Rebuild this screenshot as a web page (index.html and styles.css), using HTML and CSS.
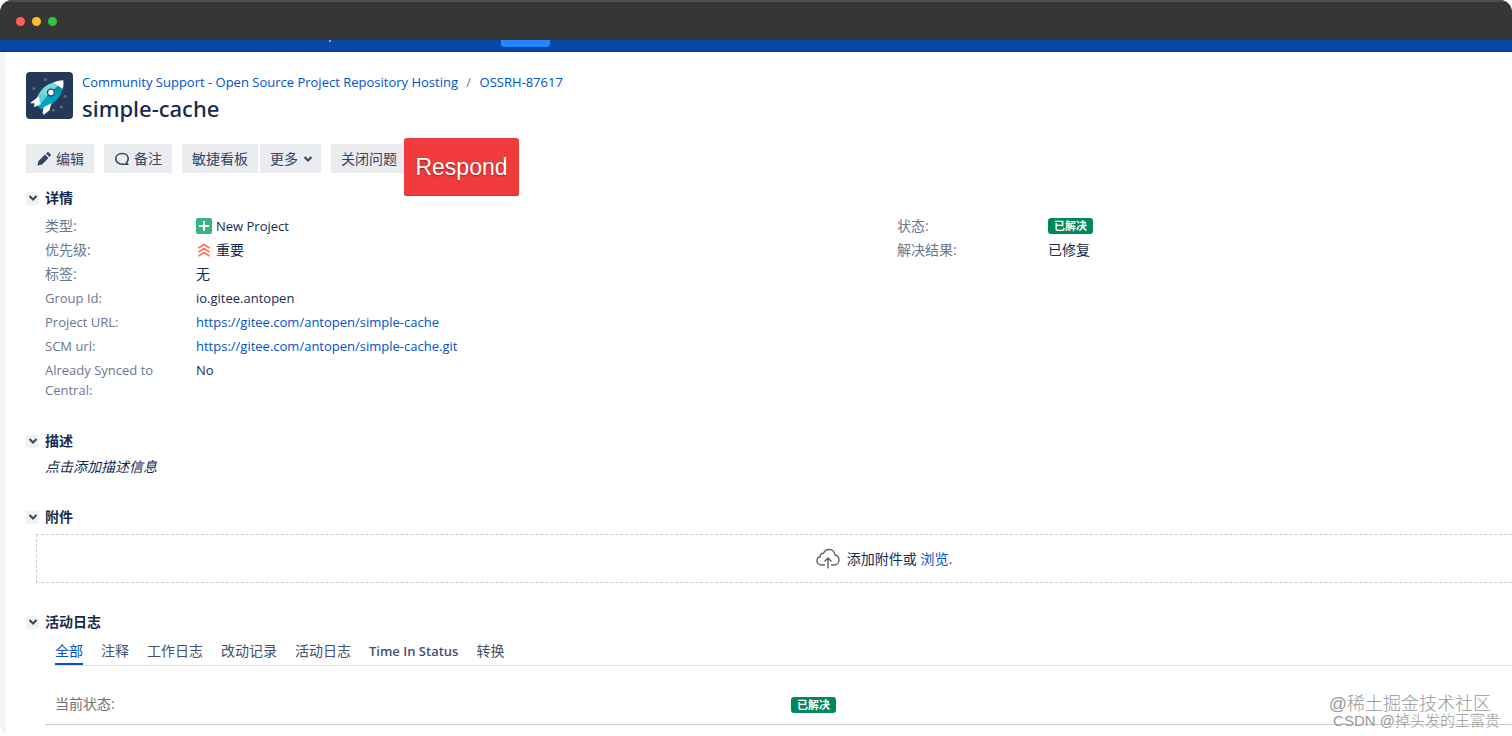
FILE: index.html
```html
<!DOCTYPE html>
<html lang="zh-CN">
<head>
    <meta charset="UTF-8">
    <meta name="viewport" content="width=device-width, initial-scale=1.0">
    <title>[OSSRH-87617] simple-cache</title>
    <link rel="stylesheet" href="styles.css">
</head>
<body>
    <div class="window">
        <div class="title-bar">
            <span class="dot dot-red"></span>
            <span class="dot dot-yellow"></span>
            <span class="dot dot-green"></span>
        </div>
        <header class="nav">
            <span class="nav-mark"></span>
            <span class="nav-create"></span>
        </header>

        <main class="content">
            <div class="issue-header">
                <svg class="avatar" viewBox="0 0 48 48" aria-hidden="true">
                    <rect width="48" height="48" rx="4" fill="#253858"/>
                    <g fill="#5e6c84">
                        <circle cx="20" cy="8" r="1.5"/>
                        <circle cx="8" cy="17" r="1.5"/>
                        <circle cx="40" cy="25" r="1.5"/>
                        <circle cx="36" cy="36" r="1.5"/>
                        <circle cx="28" cy="39" r="1.5"/>
                    </g>
                    <path d="M38 9C29 9 19 13 14 21l-5 9c-1 3 0 4 2 5z" fill="#79d8e0"/>
                    <path d="M38 9c1 10-4 19-13 25-4 3-8 5-11 3l-3-3z" fill="#00a3bf"/>
                    <path d="M38 9l-9 10 6 5c2-4 4-9 3-15z" fill="#008da6"/>
                    <path d="M15 22l-6 9 4 4 9-11z" fill="#57d0d8"/>
                    <path d="M13 25L4 32l5 0-1 4 7-3z" fill="#fff"/>
                    <path d="M26 32l-8 4-1 5 1 3 6-5z" fill="#fff"/>
                    <path d="M38 8.500c-4 0-7 1-10 2.500l9.500 6c.8-3 .9-5.500.5-8.500z" fill="#fff"/>
                    <circle cx="25.500" cy="21" r="3.500" fill="#fff" stroke="#344563" stroke-width="1.500"/>
                </svg>
                <div class="issue-titles">
                    <nav class="breadcrumbs">
                        <a href="#">Community Support - Open Source Project Repository Hosting</a>
                        <span class="slash">/</span>
                        <a href="#">OSSRH-87617</a>
                    </nav>
                    <h1>simple-cache</h1>
                </div>
            </div>

            <div class="toolbar">
                <button type="button" class="btn">
                    <svg class="icon" viewBox="0 0 16 16" aria-hidden="true"><path d="M1.500 14.500l1-4.500L9 3.500l3.500 3.500L6 13.500zM10 2.600l1.200-1.200c.5-.4 1-.4 1.500 0l1.900 1.900c.4.500.4 1 0 1.500L13.400 6z" fill="#344563"/></svg>
                    编辑
                </button>
                <button type="button" class="btn">
                    <svg class="icon" viewBox="0 0 16 16" aria-hidden="true"><path d="M8 2.500c3.500 0 6.200 2.200 6.200 5.200 0 1.600-.6 2.900-1.700 3.800l1 1.800H8c-3.500 0-6.200-2.400-6.200-5.500S4.500 2.500 8 2.500z" fill="none" stroke="#344563" stroke-width="1.600"/></svg>
                    备注
                </button>
                <div class="btn-group">
                    <button type="button" class="btn">敏捷看板</button>
                    <button type="button" class="btn btn-more">
                        更多
                        <svg class="caret" viewBox="0 0 10 10" aria-hidden="true"><path d="M1.500 3L5 6.500 8.500 3" fill="none" stroke="#344563" stroke-width="2"/></svg>
                    </button>
                </div>
                <div class="respond-group">
                    <button type="button" class="btn btn-close">关闭问题</button>
                    <button type="button" class="respond">Respond</button>
                </div>
            </div>

            <section class="module details">
                <div class="module-head">
                    <button type="button" class="toggle" aria-label="详情"><svg class="caret" viewBox="0 0 10 10" aria-hidden="true"><path d="M1.500 3L5 6.500 8.500 3" fill="none" stroke="#344563" stroke-width="2"/></svg></button>
                    <h2>详情</h2>
                </div>
                <div class="detail-columns">
                    <dl class="fields">
                        <dt>类型:</dt>
                        <dd>
                            <svg class="icon" viewBox="0 0 16 16" aria-hidden="true"><rect width="16" height="16" rx="2" fill="#36b37e"/><path d="M8 3v10M3 8h10" stroke="#fff" stroke-width="2"/></svg>
                            <span class="latin">New Project</span>
                        </dd>
                        <dt>优先级:</dt>
                        <dd>
                            <svg class="icon" viewBox="0 0 16 16" aria-hidden="true"><path d="M2.500 6L8 2.500 13.500 6M2.500 10L8 6.500l5.500 3.500M2.500 14L8 10.500l5.500 3.500" fill="none" stroke="#ff7452" stroke-width="1.800"/></svg>
                            重要
                        </dd>
                        <dt>标签:</dt>
                        <dd>无</dd>
                        <dt class="latin">Group Id:</dt>
                        <dd class="latin">io.gitee.antopen</dd>
                        <dt class="latin">Project URL:</dt>
                        <dd class="latin"><a href="#">https://gitee.com/antopen/simple-cache</a></dd>
                        <dt class="latin">SCM url:</dt>
                        <dd class="latin"><a href="#">https://gitee.com/antopen/simple-cache.git</a></dd>
                        <dt class="latin">Already Synced to Central:</dt>
                        <dd class="latin">No</dd>
                    </dl>
                    <dl class="fields">
                        <dt>状态:</dt>
                        <dd><span class="lozenge">已解决</span></dd>
                        <dt>解决结果:</dt>
                        <dd>已修复</dd>
                    </dl>
                </div>
            </section>

            <section class="module description">
                <div class="module-head">
                    <button type="button" class="toggle" aria-label="描述"><svg class="caret" viewBox="0 0 10 10" aria-hidden="true"><path d="M1.500 3L5 6.500 8.500 3" fill="none" stroke="#344563" stroke-width="2"/></svg></button>
                    <h2>描述</h2>
                </div>
                <p class="empty-text">点击添加描述信息</p>
            </section>

            <section class="module attachments">
                <div class="module-head">
                    <button type="button" class="toggle" aria-label="附件"><svg class="caret" viewBox="0 0 10 10" aria-hidden="true"><path d="M1.500 3L5 6.500 8.500 3" fill="none" stroke="#344563" stroke-width="2"/></svg></button>
                    <h2>附件</h2>
                </div>
                <div class="drop-zone">
                    <svg class="cloud" viewBox="0 0 24 24" aria-hidden="true"><path d="M9 18H5.500C3 18 1 16.200 1 13.800c0-2 1.300-3.600 3.200-4C4 7.500 5.500 6 7.600 6.200 8.600 3.700 10.500 2.500 13 2.500c3.400 0 5.800 2.300 6 5.500 2.500.6 4 2.500 4 4.900 0 2.900-2 5.100-5 5.100h-3M12 21.500V11M8.500 14.500L12 11l3.500 3.500" fill="none" stroke="#5f6368" stroke-width="1.400"/></svg>
                    <span>添加附件或 <a href="#">浏览.</a></span>
                </div>
            </section>

            <section class="module activity">
                <div class="module-head">
                    <button type="button" class="toggle" aria-label="活动日志"><svg class="caret" viewBox="0 0 10 10" aria-hidden="true"><path d="M1.500 3L5 6.500 8.500 3" fill="none" stroke="#344563" stroke-width="2"/></svg></button>
                    <h2>活动日志</h2>
                </div>
                <nav class="tabs">
                    <a href="#" class="active">全部</a>
                    <a href="#">注释</a>
                    <a href="#">工作日志</a>
                    <a href="#">改动记录</a>
                    <a href="#">活动日志</a>
                    <a href="#" class="latin strong">Time In Status</a>
                    <a href="#">转换</a>
                </nav>
                <table class="status-table">
                    <tr>
                        <th scope="row">当前状态:</th>
                        <td><span class="lozenge">已解决</span></td>
                    </tr>
                </table>
            </section>
        </main>
    </div>

    <div class="watermark">
        <div class="watermark-site">@稀土掘金技术社区</div>
        <div class="watermark-author">CSDN @掉头发的王富贵</div>
    </div>
</body>
</html>
```

FILE: styles.css
```css
* {
    box-sizing: border-box;
}

body {
    margin: 0;
    position: relative;
    background: #fff;
    color: #172b4d;
    font-family: "Open Sans", "Noto Sans CJK SC", sans-serif;
    font-size: 14px;
    line-height: 20px;
    overflow: hidden;
}

a {
    color: #0052cc;
    text-decoration: none;
}

h1, h2, p, dl, dd {
    margin: 0;
}

.latin {
    font-size: 13px;
}

.window {
    display: flex;
    flex-direction: column;
    min-height: calc(100vh - 2px);
    overflow: hidden;
    border-radius: 12px 12px 0 8px;
}

.title-bar {
    display: flex;
    align-items: center;
    gap: 7px;
    height: 40px;
    padding-left: 16px;
    background: #363636;
    border-top: 2px solid #505050;
}

.dot {
    width: 9px;
    height: 9px;
    border-radius: 50%;
}

.dot-red {
    background: #ff5f57;
}

.dot-yellow {
    background: #febc2e;
}

.dot-green {
    background: #28c840;
}

.nav {
    display: flex;
    height: 12px;
    background: #0747a6;
    border-bottom: 1px solid #063c8c;
}

.nav-mark {
    width: 2px;
    height: 2px;
    margin-left: 329px;
    background: #8aa9d8;
}

.nav-create {
    width: 49px;
    height: 7px;
    margin-left: 170px;
    border-radius: 0 0 3px 3px;
    background: #2684ff;
}

/* runs past the right edge of the window */
.content {
    flex: 1;
    width: calc(100% + 237px);
    padding: 20px 0 0 20px;
    border-left: 6px solid #f4f5f7;
}

.issue-header {
    display: flex;
    gap: 9px;
}

.avatar {
    width: 47px;
    height: 47px;
}

.breadcrumbs {
    font-size: 13px;
}

.slash {
    margin: 0 5px;
    color: #6b778c;
}

h1 {
    font-family: "Noto Sans", "Open Sans", sans-serif;
    font-size: 22px;
    font-weight: 500;
    line-height: 32px;
}

.toolbar {
    display: flex;
    gap: 10px;
    height: 58px;
    margin-top: 14px;
}

.btn-group,
.respond-group {
    display: flex;
}

.btn-group {
    gap: 2px;
}

.btn {
    display: flex;
    align-items: center;
    gap: 4px;
    height: 29px;
    margin-top: 6px;
    padding: 1px 10px 0;
    border: none;
    background: #ebecf0;
    color: #344563;
    font: inherit;
}

.btn-more {
    gap: 5px;
    padding-right: 8px;
}

.btn-close {
    padding-right: 7px;
}

.icon {
    flex: none;
    width: 16px;
    height: 16px;
}

.caret {
    flex: none;
    width: 10px;
    height: 10px;
}

.respond {
    width: 115px;
    height: 58px;
    border: none;
    border-radius: 3px;
    background: #f23b3c;
    box-shadow: inset 0 -1px 0 #c9302f;
    color: #fff;
    font-family: "Liberation Sans", Arial, sans-serif;
    font-size: 23px;
    text-shadow: 0 1px 2px rgba(0, 0, 0, 0.4);
}

.module-head {
    display: flex;
    align-items: center;
    gap: 6px;
    height: 20px;
}

.toggle {
    display: flex;
    align-items: center;
    justify-content: center;
    width: 13px;
    height: 13px;
    padding: 0;
    border: none;
    border-radius: 2px;
    background: #f1f2f4;
}

h2 {
    font-size: 14px;
    font-weight: 700;
    line-height: 20px;
}

.details {
    margin-top: -8px;
}

.detail-columns {
    display: grid;
    grid-template-columns: 1fr 1fr;
    margin: 8px 0 0 19px;
}

.fields {
    display: grid;
    grid-template-columns: 151px 1fr;
    align-content: start;
    row-gap: 4px;
}

.fields dt {
    padding-right: 30px;
    color: #6b778c;
}

.fields dd {
    display: flex;
    align-items: center;
    align-self: start;
    gap: 4px;
    height: 20px;
}

.lozenge {
    display: inline-block;
    padding: 0 6px;
    border-radius: 3px;
    background: #00875a;
    color: #fff;
    font-size: 11px;
    font-weight: 700;
    line-height: 16px;
}

.description {
    margin-top: 31px;
}

.empty-text {
    margin: 6px 0 0 19px;
    font-style: italic;
}

.attachments {
    margin-top: 30px;
}

.drop-zone {
    display: flex;
    align-items: center;
    justify-content: center;
    gap: 7px;
    height: 49px;
    margin: 7px 17px 0 10px;
    border: 1px dashed #ccc;
}

.cloud {
    width: 24px;
    height: 24px;
}

.activity {
    margin-top: 29px;
}

.tabs {
    display: flex;
    gap: 18px;
    margin: 9px 0 0 29px;
    border-bottom: 1px solid #dfe1e6;
}

.tabs a {
    height: 24px;
    color: #42526e;
}

.tabs .active {
    border-bottom: 2px solid #0052cc;
    color: #0052cc;
}

.tabs .strong {
    font-weight: 600;
}

.status-table {
    width: calc(100% - 19px);
    margin: 18px 0 0 19px;
    border-collapse: collapse;
    border-bottom: 1px solid #ccc;
    table-layout: fixed;
}

.status-table th {
    width: 736px;
    padding: 10px;
    color: #707070;
    font-weight: 400;
    text-align: left;
}

.status-table td {
    padding: 10px;
}

.watermark {
    position: absolute;
    right: 12px;
    bottom: 6px;
    color: #999;
    font-family: "Liberation Sans", "Noto Sans CJK SC", sans-serif;
    font-weight: 300;
    text-align: right;
}

.watermark-site {
    margin-right: 9px;
    font-size: 18px;
    line-height: 18px;
}

.watermark-author {
    font-size: 15px;
    line-height: 15px;
}
```
